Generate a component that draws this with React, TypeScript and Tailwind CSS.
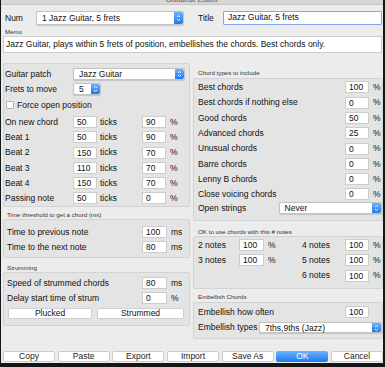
import React from "react";

const FONT = "font-['Liberation_Sans',Arial,sans-serif]";

function Stepper() {
  return (
    <div className="ml-auto h-full w-[9px] shrink-0 rounded-r-[2px] bg-gradient-to-b from-[#6ab2fb] to-[#1a79f1] flex items-center justify-center">
      <svg width="5" height="8" viewBox="0 0 5 8" fill="none">
        <polyline points="1,3 2.5,1.5 4,3" stroke="white" strokeWidth="0.9" />
        <polyline points="1,5 2.5,6.5 4,5" stroke="white" strokeWidth="0.9" />
      </svg>
    </div>
  );
}

function Select({ value, className }: { value: string; className: string }) {
  return (
    <div
      className={`flex items-center bg-white border border-[#c4c4c4] rounded-[2px] shadow-[0_0.5px_1px_rgba(0,0,0,0.15)] ${className}`}
    >
      <span className="pl-[5px] text-[8.5px] leading-[10px] text-[#111] truncate">{value}</span>
      <Stepper />
    </div>
  );
}

function Box({ v, w = "w-[24px]" }: { v: string; w?: string }) {
  return (
    <div
      className={`${w} h-[12px] shrink-0 bg-white border border-[#cdcdcd] pl-[3px] text-[8.5px] leading-[11px] text-[#111]`}
    >
      {v}
    </div>
  );
}

function Small({ children, className }: { children: React.ReactNode; className: string }) {
  return <div className={`text-[6.2px] leading-[8px] text-[#333] ${className}`}>{children}</div>;
}

const TICK_ROWS = [
  ["On new chord", "50", "90"],
  ["Beat 1", "50", "90"],
  ["Beat 2", "150", "70"],
  ["Beat 3", "110", "70"],
  ["Beat 4", "150", "70"],
  ["Passing note", "50", "0"],
];

const CHORD_ROWS = [
  ["Best chords", "100"],
  ["Best chords if nothing else", "0"],
  ["Good chords", "50"],
  ["Advanced chords", "25"],
  ["Unusual chords", "0"],
  ["Barre chords", "0"],
  ["Lenny B chords", "0"],
  ["Close voicing chords", "0"],
];

const PANEL = "border border-[#d3d3d3] bg-[#e4e4e4] rounded-[2px]";

export default function App() {
  return (
    <div className={`w-[385px] h-[367px] bg-[#161616] pl-[1px] pr-[2px] pb-[4px] overflow-hidden ${FONT}`}>
      <div className="h-full bg-[#ececec] flex flex-col text-[8.5px] text-[#111]">
        {/* title bar, mostly cut off */}
        <div className="h-[5px] overflow-hidden bg-[#d6d6d6] flex justify-center border-b border-[#c8c8c8]">
          <span className="text-[8px] leading-[8px] mt-[-4px] text-[#5a5a5a]">Guitarist Editor</span>
        </div>

        <div className="flex items-center h-[14px] mt-[6px] pl-[4px]">
          <span className="w-[31px]">Num</span>
          <Select value="1 Jazz Guitar, 5 frets" className="w-[148px] h-[14px]" />
          <span className="ml-[14px] w-[25px]">Title</span>
          <div className="w-[159px] h-[14px] bg-white border-[1.5px] border-[#7eaaec] rounded-[1px] pl-[4px] leading-[11px]">
            Jazz Guitar, 5 frets
          </div>
        </div>

        <Small className="mt-[3px] pl-[4px]">Memo</Small>
        <div className="ml-[2px] mr-[1px] h-[17px] bg-white border border-[#cdcdcd] pl-[2px] leading-[15px]">
          Jazz Guitar, plays within 5 frets of position, embellishes the chords. Best chords only.
        </div>

        <div className="flex mt-[10px] ml-[2px] gap-[3px]">
          {/* left column */}
          <div className="w-[187px] flex flex-col">
            <div className={`${PANEL} h-[144px] pl-[1px] pt-[4px] flex flex-col`}>
              <div className="flex items-center h-[12px]">
                <span className="w-[68px]">Guitar patch</span>
                <Select value="Jazz Guitar" className="w-[112px] h-[12px]" />
              </div>
              <div className="flex items-center h-[12px] mt-[3px]">
                <span className="w-[68px]">Frets to move</span>
                <Select value="5" className="w-[28px] h-[12px]" />
              </div>
              <div className="flex items-center h-[10px] mt-[5px] pl-[1px]">
                <div className="w-[8px] h-[8px] bg-white border border-[#b5b5b5] rounded-[1px]" />
                <span className="ml-[3px]">Force open position</span>
              </div>
              <div className="flex flex-col gap-[3.3px] mt-[6px]">
                {TICK_ROWS.map(([label, t, p]) => (
                  <div key={label} className="flex items-center h-[12px]">
                    <span className="w-[68px]">{label}</span>
                    <Box v={t} />
                    <span className="ml-[3px] w-[42px]">ticks</span>
                    <Box v={p} />
                    <span className="ml-[4px]">%</span>
                  </div>
                ))}
              </div>
            </div>

            <Small className="h-[12px] pt-[4px] pl-[4px]">Time threshold to get a chord (ms)</Small>
            <div className={`${PANEL} h-[39px] pl-[3px] pt-[6px] flex flex-col gap-[3px]`}>
              {[
                ["Time to previous note", "100"],
                ["Time to the next note", "80"],
              ].map(([label, v]) => (
                <div key={label} className="flex items-center h-[12px]">
                  <span className="w-[135px]">{label}</span>
                  <Box v={v} w="w-[25px]" />
                  <span className="ml-[4px]">ms</span>
                </div>
              ))}
            </div>

            <Small className="h-[14px] pt-[6px] pl-[4px]">Strumming</Small>
            <div className={`${PANEL} h-[54px] pl-[3px] pt-[4px] flex flex-col`}>
              <div className="flex items-center h-[12px]">
                <span className="w-[135px]">Speed of strummed chords</span>
                <Box v="80" w="w-[25px]" />
                <span className="ml-[4px]">ms</span>
              </div>
              <div className="flex items-center h-[12px] mt-[3px]">
                <span className="w-[135px]">Delay start time of strum</span>
                <Box v="0" w="w-[25px]" />
                <span className="ml-[4px]">%</span>
              </div>
              <div className="flex h-[11px] mt-[4px] ml-[1px] gap-[5px]">
                <div className="w-[84px] bg-white border border-[#cfcfcf] rounded-[2px] text-center leading-[9px]">Plucked</div>
                <div className="w-[87px] bg-white border border-[#cfcfcf] rounded-[2px] text-center leading-[9px]">Strummed</div>
              </div>
            </div>
          </div>

          {/* right column */}
          <div className="w-[190px] flex flex-col">
            <Small className="h-[15px] pt-[6px] pl-[5px]">Chord types to include</Small>
            <div className={`${PANEL} h-[143px] pl-[4px] pt-[2.4px] flex flex-col`}>
              <div className="flex flex-col gap-[3.3px]">
                {CHORD_ROWS.map(([label, v]) => (
                  <div key={label} className="flex items-center h-[12px]">
                    <span className="w-[147px]">{label}</span>
                    <Box v={v} />
                    <span className="ml-[4px]">%</span>
                  </div>
                ))}
              </div>
              <div className="flex items-center h-[12px] mt-[1.5px]">
                <span className="w-[81px]">Open strings</span>
                <Select value="Never" className="w-[104px] h-[12px]" />
              </div>
            </div>

            <Small className="h-[15px] pt-[7px] pl-[5px]">OK to use chords with this # notes</Small>
            <div className={`${PANEL} h-[53px] pl-[4px] pt-[2px] flex flex-col gap-[3.3px]`}>
              {[
                ["2 notes", "4 notes"],
                ["3 notes", "5 notes"],
                ["", "6 notes"],
              ].map(([a, b]) => (
                <div key={b} className="flex items-center h-[12px]">
                  <div className="w-[104px] flex items-center">
                    {a && (
                      <>
                        <span className="w-[41px]">{a}</span>
                        <Box v="100" w="w-[25px]" />
                        <span className="ml-[4px]">%</span>
                      </>
                    )}
                  </div>
                  <span className="w-[43px]">{b}</span>
                  <Box v="100" />
                  <span className="ml-[4px]">%</span>
                </div>
              ))}
            </div>

            <Small className="h-[13px] pt-[4px] pl-[5px]">Embellish Chords</Small>
            <div className={`${PANEL} h-[37px] pl-[4px] pt-[3px] flex flex-col`}>
              <div className="flex items-center h-[12px]">
                <span className="w-[147px]">Embellish how often</span>
                <Box v="100" />
              </div>
              <div className="flex items-center h-[11px] mt-[4px]">
                <span className="w-[61px]">Embellish types</span>
                <Select value="7ths,9ths (Jazz)" className="w-[123px] h-[11px]" />
              </div>
            </div>
          </div>
        </div>

        <div className="mt-auto mb-[1px] ml-[2px] flex gap-[2.7px] h-[11px]">
          {["Copy", "Paste", "Export", "Import", "Save As", "OK", "Cancel"].map((b) =>
            b === "OK" ? (
              <div
                key={b}
                className="w-[52px] rounded-[2px] bg-gradient-to-b from-[#6cb3fb] to-[#1479f2] text-white text-center leading-[11px]"
              >
                {b}
              </div>
            ) : (
              <div
                key={b}
                className="w-[52px] rounded-[2px] bg-white border border-[#cbcbcb] text-center leading-[9px] text-[#222]"
              >
                {b}
              </div>
            )
          )}
        </div>
      </div>
    </div>
  );
}
